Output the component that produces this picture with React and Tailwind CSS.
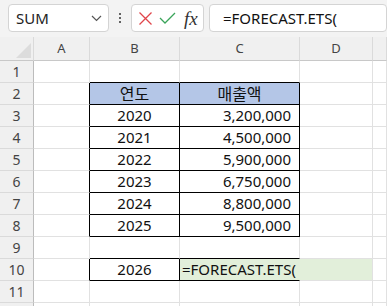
import React from "react";

const cols = ["A", "B", "C", "D", "E"];

const cells = {
  "2-1": { text: "연도", align: "center" },
  "2-2": { text: "매출액", align: "center" },
  "3-1": { text: "2020", align: "center" },
  "3-2": { text: "3,200,000", align: "right" },
  "4-1": { text: "2021", align: "center" },
  "4-2": { text: "4,500,000", align: "right" },
  "5-1": { text: "2022", align: "center" },
  "5-2": { text: "5,900,000", align: "right" },
  "6-1": { text: "2023", align: "center" },
  "6-2": { text: "6,750,000", align: "right" },
  "7-1": { text: "2024", align: "center" },
  "7-2": { text: "8,800,000", align: "right" },
  "8-1": { text: "2025", align: "center" },
  "8-2": { text: "9,500,000", align: "right" },
  "10-1": { text: "2026", align: "center" },
};

// cells with a black outline (C10 only gets top/bottom)
const boxed = (r, c) => {
  if (r >= 2 && r <= 8 && (c === 1 || c === 2)) return true;
  if (r === 10 && c === 1) return true;
  return false;
};

const Cell = ({ r, c }) => {
  const editing = r === 10 && (c === 2 || c === 3);
  const heading = r === 2 && (c === 1 || c === 2);
  const rightBlack = boxed(r, c) || boxed(r, c + 1);
  const bottomBlack =
    boxed(r, c) || boxed(r + 1, c) || (c === 2 && (r === 10 || r === 9));
  const data = cells[`${r}-${c}`];

  let rightClass = rightBlack ? "border-r-black" : "border-r-[#e1e1e1]";
  if (r === 10 && c === 2) rightClass = "border-r-[#e2efda]";

  let bg = "bg-white";
  if (editing) bg = "bg-[#e2efda]";
  if (heading) bg = "bg-[#b4c6e7]";

  return (
    <div
      className={`h-[22px] border-r border-b ${rightClass} ${
        bottomBlack ? "border-b-black" : "border-b-[#e1e1e1]"
      } ${bg} ${
        r === 10 && c === 2 ? "relative z-10" : ""
      } flex items-center text-[15px] leading-none text-[#111]`}
    >
      {data && (
        <span
          className={`w-full ${
            data.align === "right" ? "text-right pr-[8px]" : "text-center"
          } ${heading ? "text-[16px]" : ""}`}
        >
          {data.text}
        </span>
      )}
      {r === 10 && c === 2 && (
        <span className="whitespace-nowrap pl-[2px]">=FORECAST.ETS(</span>
      )}
    </div>
  );
};

export default function App() {
  const rows = Array.from({ length: 12 }, (_, i) => i + 1);

  return (
    <div
      className="w-[387px] h-[306px] overflow-hidden bg-white"
      style={{ fontFamily: '"Noto Sans", "Noto Sans CJK KR", sans-serif' }}
    >
      {/* formula bar */}
      <div className="h-[37px] bg-[#f3f3f3] flex items-start pt-[4px] pl-[8px]">
        <div className="w-[101px] h-[28px] bg-white border border-[#d4d4d4] rounded-[4px] flex items-center justify-between pl-[7px] pr-[6px]">
          <span className="text-[15px] text-[#222]">SUM</span>
          <svg width="11" height="7" viewBox="0 0 11 7">
            <path d="M1 1 L5.5 5.5 L10 1" fill="none" stroke="#555" strokeWidth="1.2" />
          </svg>
        </div>
        <div className="w-[22px] h-[28px] flex flex-col items-center justify-center gap-[2px]">
          <span className="w-[2px] h-[2px] bg-[#333] rounded-full" />
          <span className="w-[2px] h-[2px] bg-[#333] rounded-full" />
          <span className="w-[2px] h-[2px] bg-[#333] rounded-full" />
        </div>
        <div className="w-[73px] h-[28px] bg-white border border-[#d4d4d4] rounded-[4px] flex items-center pl-[6px] gap-[6px]">
          <svg width="15" height="15" viewBox="0 0 15 15">
            <path d="M1.5 1.5 L13.5 13.5 M13.5 1.5 L1.5 13.5" stroke="#e0454b" strokeWidth="1.3" fill="none" />
          </svg>
          <svg width="17" height="14" viewBox="0 0 17 14">
            <path d="M1 7 L6 12 L16 2" stroke="#3aa45a" strokeWidth="1.3" fill="none" />
          </svg>
          <span
            className="text-[19px] italic text-[#333] ml-[2px] leading-none"
            style={{ fontFamily: '"Liberation Serif", serif' }}
          >
            fx
          </span>
        </div>
        <div className="ml-[5px] flex-1 h-[28px] bg-white border border-[#d4d4d4] rounded-[4px] flex items-center pl-[13px]">
          <span className="text-[15px] text-[#111]">=FORECAST.ETS(</span>
        </div>
      </div>

      {/* sheet grid */}
      <div className="grid grid-cols-[34px_56px_90px_120px_73px_1fr]">
        {/* column headers */}
        <div className="h-[24px] bg-[#f0f0f0] border-r border-b border-b-[#c8c8c8] border-r-[#dadada] flex items-end justify-end pr-[2px] pb-[2px]">
          <svg width="15" height="15" viewBox="0 0 15 15">
            <path d="M15 0 L15 15 L0 15 Z" fill="#dcdcdc" />
          </svg>
        </div>
        {cols.map((col) => (
          <div
            key={col}
            className="h-[24px] bg-[#f0f0f0] border-r border-b border-r-[#dadada] border-b-[#c8c8c8] flex items-center justify-center text-[13px] text-[#444]"
          >
            {col !== "E" && col}
          </div>
        ))}

        {rows.map((r) => (
          <React.Fragment key={r}>
            <div className="h-[22px] bg-[#f0f0f0] border-r border-b border-r-[#bcbcbc] border-b-[#dadada] flex items-center justify-center text-[14px] text-[#444]">
              {r < 12 && r}
            </div>
            {cols.map((_, c) => (
              <Cell key={c} r={r} c={c} />
            ))}
          </React.Fragment>
        ))}
      </div>
    </div>
  );
}
